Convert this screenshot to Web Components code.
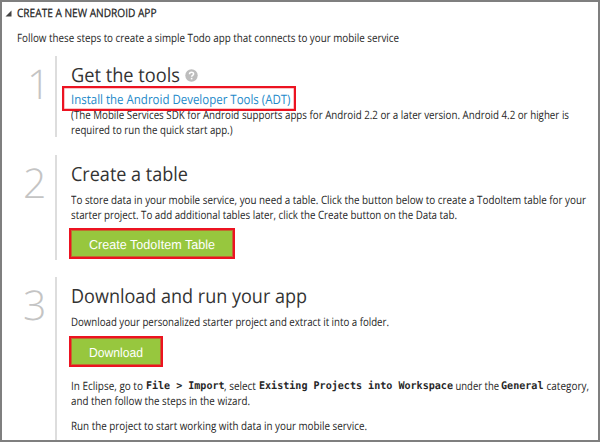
<!DOCTYPE html>
<html lang="en"><head><meta charset="utf-8"><title>Create a new Android app</title>
<style>
html,body{margin:0;height:100%;background:#fff}
body{font-family:"Open Sans","Noto Sans",sans-serif;font-size:11.5px;color:#262626;overflow:hidden;text-rendering:geometricPrecision}
.gap{margin-top:10px}
</style></head><body>
<quick-start>
  <section-title slot="title"><fit-text w="139.5">CREATE A NEW ANDROID APP</fit-text></section-title>
  <text-line slot="intro"><fit-text w="382">Follow these steps to create a simple Todo app that connects to your mobile service</fit-text></text-line>
  <quick-step number="1" style="height:81px;--num-x:4px">
    <step-heading><fit-text w="109">Get the tools</fit-text><help-icon></help-icon></step-heading>
    <tool-link><fit-text w="219.5">Install the Android Developer Tools (ADT)</fit-text></tool-link>
    <text-line style="margin-top:-3px"><fit-text w="498">(The Mobile Services SDK for Android supports apps for Android 2.2 or a later version. Android 4.2 or higher is</fit-text></text-line>
    <text-line><fit-text w="161.5">required to run the quick start app.)</fit-text></text-line>
  </quick-step>
  <quick-step number="2" style="height:105px;margin-top:18px">
    <step-heading><fit-text w="117">Create a table</fit-text></step-heading>
    <text-line style="margin-top:2px"><fit-text w="515">To store data in your mobile service, you need a table. Click the button below to create a TodoItem table for your</fit-text></text-line>
    <text-line><fit-text w="386">starter project. To add additional tables later, click the Create button on the Data tab.</fit-text></text-line>
    <action-button style="width:166px;margin-top:5px"><fit-text w="126">Create TodoItem Table</fit-text></action-button>
  </quick-step>
  <quick-step number="3" style="height:163px;margin-top:17px">
    <step-heading><fit-text w="236">Download and run your app</fit-text></step-heading>
    <text-line style="margin-top:2px"><fit-text w="318">Download your personalized starter project and extract it into a folder.</fit-text></text-line>
    <action-button style="width:94px;margin-top:6px"><fit-text w="54">Download</fit-text></action-button>
    <text-line style="margin-top:12px"><fit-text w="74.5">In Eclipse, go to </fit-text><fit-text w="78.5" mono>File &gt; Import</fit-text><fit-text w="34.5">, select </fit-text><fit-text w="194" mono>Existing Projects into Workspace</fit-text><fit-text w="48.5"> under the </fit-text><fit-text w="42.5" mono>General</fit-text><fit-text w="45"> category,</fit-text></text-line>
    <text-line><fit-text w="179">and then follow the steps in the wizard.</fit-text></text-line>
    <text-line class="gap"><fit-text w="296">Run the project to start working with data in your mobile service.</fit-text></text-line>
  </quick-step>
</quick-start>
<script>
const define=(name,html,after)=>customElements.define(name,class extends HTMLElement{
  constructor(){super();this.attachShadow({mode:'open'}).innerHTML=html}
  connectedCallback(){if(after)after(this)}
});
define('quick-start',`<style>
:host{display:flex;flex-direction:column;box-sizing:border-box;width:600px;height:442px;border:2px solid #7f7f7f;background:#fff}
.intro{padding:8px 0 0 15px;height:31px;box-sizing:border-box;margin-bottom:2px}
</style><slot name="title"></slot><div class="intro"><slot name="intro"></slot></div><slot></slot>`);
define('section-title',`<style>
:host{display:flex;height:18px;line-height:18px;padding:3px 0 0 3px;color:#222;font-size:11.5px;-webkit-text-stroke:.25px #222}
svg{width:7px;height:7px;margin:5px 5px 0 0;flex:none}
</style><svg viewBox="0 0 7 7"><path d="M6.5 .5V6.5H.5z" fill="#444"/></svg><slot></slot>`);
define('quick-step',`<style>
:host{display:flex;flex:none;box-sizing:border-box}
.num{width:53px;box-sizing:border-box;padding-left:calc(21px + var(--num-x,0px));font-size:41px;line-height:57px;font-weight:300;color:#c4c4c4;flex:none;height:57px}
.body{border-left:2px solid #ddd;padding-left:14px;display:flex;flex-direction:column;flex:1;min-width:0}
</style><div class="num"></div><div class="body"><slot></slot></div>`,
e=>e.shadowRoot.querySelector('.num').textContent=e.getAttribute('number'));
define('step-heading',`<style>
:host{display:flex;align-items:center;box-sizing:border-box;font-size:19.5px;line-height:32px;height:37px;padding-bottom:0;margin-bottom:-1px;flex:none;color:#333}
</style><slot></slot>`);
define('help-icon',`<style>:host{display:block;width:13px;height:13px;margin:1px 0 0 5px}svg{display:block}</style>
<svg width="13" height="13" viewBox="0 0 13 13"><circle cx="6.5" cy="6.5" r="6.2" fill="#bdbdbd"/><path d="M4.5 5.2C4.5 2.6 8.6 2.7 8.6 5C8.6 6.3 6.6 6.4 6.6 7.7" fill="none" stroke="#fff" stroke-width="1.5"/><rect x="5.8" y="8.8" width="1.6" height="1.6" fill="#fff"/></svg>`);
define('tool-link',`<style>
:host{display:flex;position:relative;z-index:1;align-self:flex-start;box-sizing:border-box;width:234px;height:25px;margin:-6px 0 0 -9px;border:2px solid #ec1321;box-shadow:inset 0 0 0 .5px #ec132180;padding-left:7px;line-height:22px;font-size:13px;color:#2289c9;flex:none}
</style><slot></slot>`);
define('text-line',`<style>:host{display:flex;height:15px;line-height:15px;flex:none}</style><slot></slot>`);
define('action-button',`<style>
:host{display:flex;justify-content:center;flex:none;box-sizing:border-box;height:31px;margin-left:-2px;border:2px solid #ec1321;box-shadow:inset 0 0 0 1px #ec132180;background:#97c73e;color:#fff;font:13px/30px "Liberation Sans",sans-serif}
</style><slot></slot>`);
// Scales the run horizontally so that it fills the width in its "w" attribute.
define('fit-text',`<style>
:host{display:block;white-space:pre;flex:none}
:host([mono]){font-family:"DejaVu Sans Mono",monospace;font-weight:700;font-size:10.5px}
span{display:inline-block;transform-origin:0 50%}
</style><span><slot></slot></span>`,e=>{
  const s=e.shadowRoot.querySelector('span'),w=+e.getAttribute('w');
  e.style.width=w+'px';
  const natural=s.getBoundingClientRect().width;
  s.style.transform='scaleX('+w/natural+')';
  s.style.marginRight=(w-natural)+'px';
  s.style.width=w+'px';
  s.style.marginRight='0';
});
</script>
</body></html>
